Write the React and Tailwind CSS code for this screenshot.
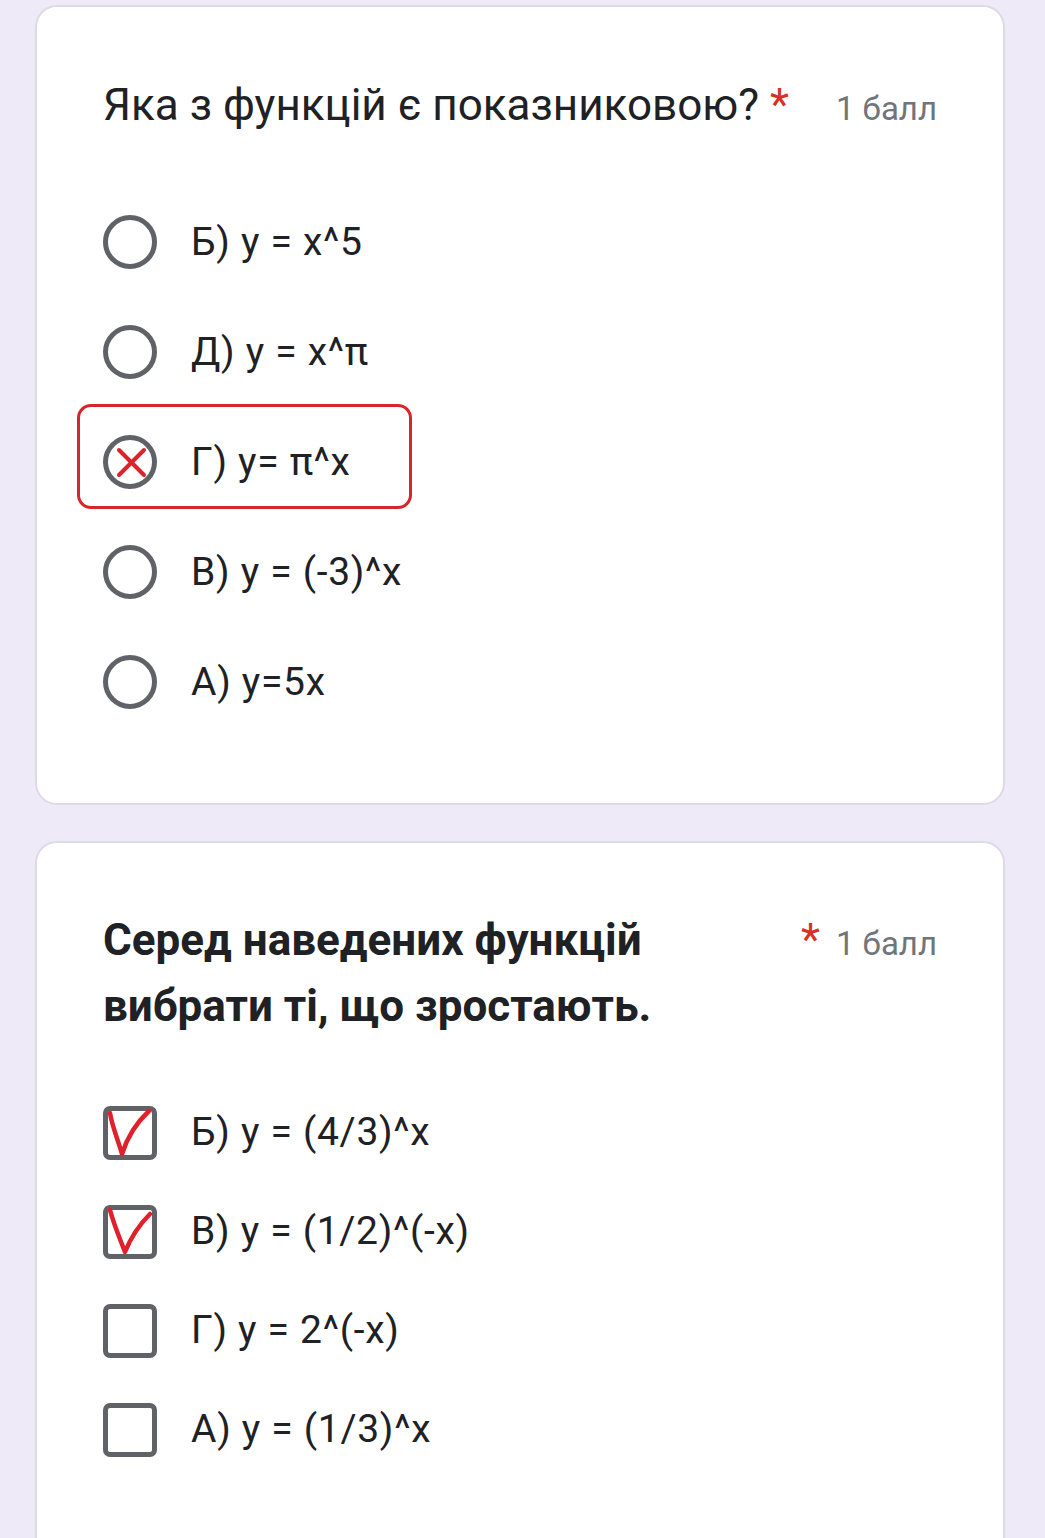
import React from 'react'

// Google Forms style quiz review (mobile screenshot, ~2.75x scale)
const RADIO_OPTIONS = [
  { label: 'Б) y = x^5' },
  { label: 'Д) y = x^π' },
  { label: 'Г) y= π^x', wrong: true },
  { label: 'В) y = (-3)^x' },
  { label: 'А) y=5x' },
]

const CHECK_OPTIONS = [
  { label: 'Б) y = (4/3)^x', mark: 'M7 7 C9 20 15 34 19 48 C24 32 33 17 46 5' },
  { label: 'В) y = (1/2)^(-x)', mark: 'M7 5 C11 20 17 34 22 47 C28 32 37 19 47 9' },
  { label: 'Г) y = 2^(-x)' },
  { label: 'А) y = (1/3)^x' },
]

function Radio({ wrong }) {
  return (
    <svg width="54" height="54" viewBox="0 0 54 54" className="shrink-0">
      <circle cx="27" cy="27" r="24.5" fill="none" stroke="#5f6368" strokeWidth="5" />
      {wrong && (
        <g stroke="#d7262b" strokeWidth="4" strokeLinecap="round">
          <path d="M16 15 L41 40" />
          <path d="M41 15 L16 40" />
        </g>
      )}
    </svg>
  )
}

function Checkbox({ mark }) {
  return (
    <div className="relative w-[54px] h-[54px] shrink-0 rounded-[7px] border-[5px] border-[#5f6368]">
      {mark && (
        <svg width="54" height="54" viewBox="0 0 54 54" className="absolute -left-[5px] -top-[5px]">
          <path d={mark} fill="none" stroke="#e0202a" strokeWidth="4.5" strokeLinecap="round" strokeLinejoin="round" />
        </svg>
      )}
    </div>
  )
}

function Card({ children, className = '' }) {
  return (
    <div className={`bg-white border-2 border-[#dcdbe3] rounded-[22px] px-[66px] ${className}`}>
      {children}
    </div>
  )
}

export default function App() {
  return (
    <div
      className="min-h-screen bg-[#eeeaf8] pl-[35px] pr-[40px] pt-[5px] flex flex-col gap-[36px] text-[#202124]"
      style={{ fontFamily: 'Roboto, "Noto Sans", sans-serif' }}
    >
      {/* ── Question 1: radio ─────────────────────────────── */}
      <Card className="pt-[65px] pb-[66px]">
        <div className="flex items-baseline justify-between">
          <h2 className="text-[44px] leading-[66px] font-normal">
            Яка з функцій є показниковою? <span className="text-[#d93025]">*</span>
          </h2>
          <span className="text-[33px] text-[#70757a] shrink-0">1 балл</span>
        </div>

        <div className="mt-[49px] flex flex-col">
          {RADIO_OPTIONS.map(({ label, wrong }) => (
            <div key={label} className="relative h-[110px] flex items-center gap-[34px]">
              {wrong && (
                <div className="absolute -left-[26px] -top-[3px] w-[335px] h-[105px] border-[3px] border-[#d7262b] rounded-[14px]" />
              )}
              <Radio wrong={wrong} />
              <span className="text-[39px] leading-none tracking-[0.7px]">{label}</span>
            </div>
          ))}
        </div>
      </Card>

      {/* ── Question 2: checkboxes ────────────────────────── */}
      <Card className="pt-[64px] pb-[80px]">
        <div className="flex items-baseline justify-between">
          <h2 className="max-w-[660px] text-[44px] leading-[66px] font-bold">
            Серед наведених функцій вибрати ті, що зростають.
          </h2>
          <div className="flex items-baseline gap-[16px] shrink-0">
            <span className="text-[44px] text-[#d93025]">*</span>
            <span className="text-[33px] text-[#70757a]">1 балл</span>
          </div>
        </div>

        <div className="mt-[44px] flex flex-col">
          {CHECK_OPTIONS.map(({ label, mark }) => (
            <div key={label} className="h-[99px] flex items-center gap-[34px]">
              <Checkbox mark={mark} />
              <span className="text-[39px] leading-none tracking-[0.7px]">{label}</span>
            </div>
          ))}
        </div>
      </Card>
    </div>
  )
}
